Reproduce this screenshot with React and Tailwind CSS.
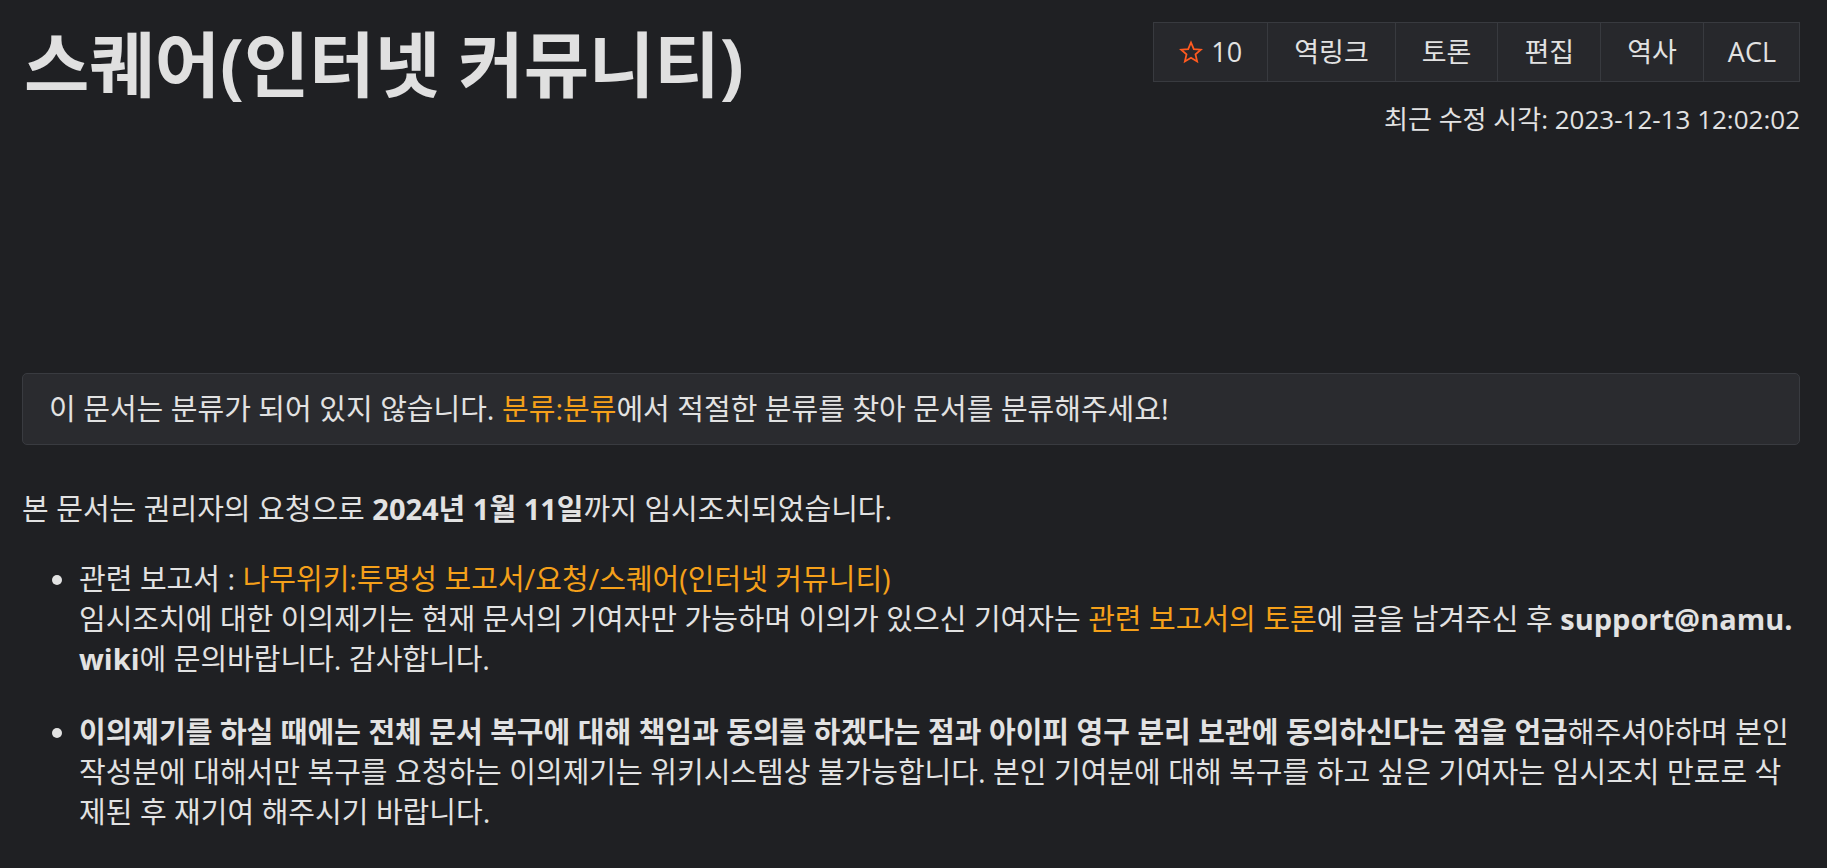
export default function App() {
  const link = "text-[#f5a01a]";
  return (
    <div className="min-h-screen bg-[#1f2023] text-[#e2e2e2] pl-[22px] pr-[27px] pt-[22px] font-['Open_Sans','Noto_Sans_CJK_KR',sans-serif] text-[29px] leading-[40px]">
      <div className="flex justify-between items-start">
        <h1 className="text-[71px] font-bold leading-[80px] text-[#e0e0e0] mt-[2px] pl-[2px] whitespace-nowrap">스퀘어(인터넷 커뮤니티)</h1>
        <div className="flex flex-col items-end">
          <div className="flex border border-[#383a3f] bg-[#27282c] text-[27px] leading-[40px]">
            <div className="flex items-center gap-[8px] px-[25px] py-[9px]">
              <svg width="24" height="24" viewBox="0 0 24 24" fill="none" stroke="#ff5a1f" strokeWidth="1.8" strokeLinejoin="miter">
                <path d="M12 2.5l2.8 6.6 7.1.6-5.4 4.7 1.6 7-6.1-3.7-6.1 3.7 1.6-7-5.4-4.7 7.1-.6z" />
              </svg>
              <span>10</span>
            </div>
            <div className="px-[26px] py-[9px] border-l border-[#383a3f]">역링크</div>
            <div className="px-[26px] py-[9px] border-l border-[#383a3f]">토론</div>
            <div className="px-[26px] py-[9px] border-l border-[#383a3f]">편집</div>
            <div className="px-[26px] py-[9px] border-l border-[#383a3f]">역사</div>
            <div className="pl-[24px] pr-[23px] py-[9px] border-l border-[#383a3f]">ACL</div>
          </div>
          <div className="mt-[17px] text-[26px] leading-[40px]">최근 수정 시각: 2023-12-13 12:02:02</div>
        </div>
      </div>

      <div className="mt-[234px] rounded-[5px] border border-[#393b40] bg-[#2a2b2f] px-[26px] py-[15px]">
        이 문서는 분류가 되어 있지 않습니다. <span className={link}>분류:분류</span>에서 적절한 분류를 찾아 문서를 분류해주세요!
      </div>

      <p className="mt-[44px]">
        본 문서는 권리자의 요청으로 <b>2024년 1월 11일</b>까지 임시조치되었습니다.
      </p>

      <ul className="mt-[30px] pl-[57px] list-disc break-all marker:text-[#e2e2e2]">
        <li>
          관련 보고서 : <span className={link}>나무위키:투명성 보고서/요청/스퀘어(인터넷 커뮤니티)</span>
          <br />
          임시조치에 대한 이의제기는 현재 문서의 기여자만 가능하며 이의가 있으신 기여자는 <span className={link}>관련 보고서의 토론</span>에 글을 남겨주신 후 <b>support@namu.wiki</b>에 문의바랍니다. 감사합니다.
        </li>
        <li className="mt-[33px]">
          <b>이의제기를 하실 때에는 전체 문서 복구에 대해 책임과 동의를 하겠다는 점과 아이피 영구 분리 보관에 동의하신다는 점을 언급</b>해주셔야하며 본인 작성분에 대해서만 복구를 요청하는 이의제기는 위키시스템상 불가능합니다. 본인 기여분에 대해 복구를 하고 싶은 기여자는 임시조치 만료로 삭제된 후 재기여 해주시기 바랍니다.
        </li>
      </ul>
    </div>
  );
}
